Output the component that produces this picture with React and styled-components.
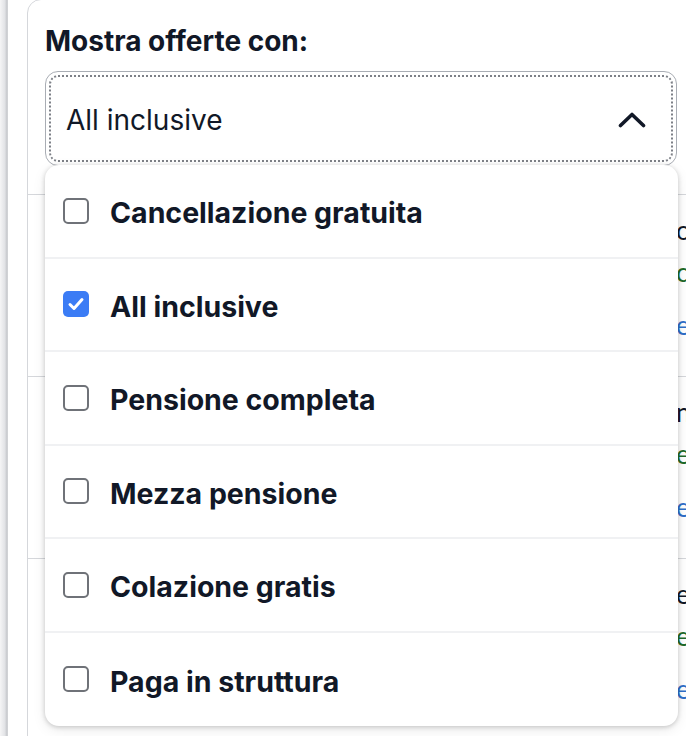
import React from 'react';
import styled, { createGlobalStyle } from 'styled-components';

const GlobalStyle = createGlobalStyle`
  html, body {
    margin: 0;
    padding: 0;
    background: #fff;
    overflow: hidden;
  }
  body {
    font-family: 'Inter', 'Liberation Sans', sans-serif;
    color: #111827;
  }
`;

const Page = styled.div`
  display: flex;
  align-items: flex-start;
  width: 686px;
  height: 736px;
  overflow: hidden;
`;

const Rail = styled.div`
  flex: none;
  width: 8px;
  height: 736px;
  background: linear-gradient(to right, #f5f5f6, #e2e3e6 60%, #c3c5c9 90%, #e6e7e9);
`;

const Card = styled.section`
  flex: none;
  width: 900px;
  min-height: 760px;
  margin: -1px 0 0 19px;
  border: 1px solid #d5d7db;
  border-radius: 14px 14px 0 0;
  background: #fff;
`;

const FilterSection = styled.div`
  padding: 24px 0 28px 17px;
  border-bottom: 1px solid #d5d7db;
`;

const Title = styled.h2`
  margin: 0 0 13px;
  font-size: 28px;
  line-height: 34px;
  font-weight: 700;
  color: #111827;
`;

const SelectWrap = styled.div`
  position: relative;
  width: 632px;
`;

const SelectButton = styled.div`
  box-sizing: border-box;
  display: flex;
  align-items: center;
  justify-content: space-between;
  height: 95px;
  padding: 2px 30px 0 20px;
  border: 1.5px solid #a9adb4;
  border-radius: 13px;
  outline: 2px dotted #7d8087;
  outline-offset: -6px;
  font-size: 28px;
  color: #111827;
`;

const Menu = styled.ul`
  position: absolute;
  top: calc(100% - 1px);
  left: 0;
  width: 633px;
  margin: 0;
  padding: 0;
  list-style: none;
  background: #fff;
  border-radius: 14px;
  box-shadow: 0 1px 5px rgba(0, 0, 0, 0.2), 0 4px 14px rgba(0, 0, 0, 0.08);
  overflow: hidden;
  z-index: 2;
`;

const Option = styled.li`
  box-sizing: border-box;
  display: flex;
  align-items: center;
  gap: 21px;
  height: 93.5px;
  padding: 0 0 0 18px;
  border-bottom: 2px solid #f0f1f3;
  font-size: 28.5px;
  font-weight: 700;
  color: #111827;

  &:last-child {
    border-bottom: none;
  }
`;

const Label = styled.span`
  position: relative;
  top: 2px;
`;

const Box = styled.span`
  flex: none;
  box-sizing: border-box;
  display: flex;
  align-items: center;
  justify-content: center;
  width: 26px;
  height: 26px;
  border-radius: 5px;
  border: ${({ $checked }) => ($checked ? 'none' : '2px solid #6f7278')};
  background: ${({ $checked }) => ($checked ? '#3b7cf5' : '#fff')};
`;

const OfferRow = styled.div`
  display: grid;
  grid-template-columns: 648px 1fr;
  height: 181px;
  border-bottom: 1px solid #d5d7db;
`;

const Thumb = styled.div``;

const Info = styled.div`
  padding-top: 19px;
  font-family: 'Lato', 'Liberation Sans', sans-serif;
  font-size: 26px;
  line-height: 32px;
  white-space: nowrap;
`;

const Name = styled.div`
  margin-bottom: 10px;
  color: #111827;
`;

const Perk = styled.div`
  margin-bottom: 21px;
  color: #1f6b2b;
`;

const Link = styled.div`
  color: #2f6fc9;
`;

const Chevron = () => (
  <svg width="28" height="16" viewBox="0 0 28 16" fill="none">
    <path
      d="M2.5 13.5 L14 2.5 L25.5 13.5"
      stroke="#111827"
      strokeWidth="3.6"
      strokeLinecap="round"
      strokeLinejoin="round"
    />
  </svg>
);

const Check = () => (
  <svg width="20" height="20" viewBox="0 0 20 20" fill="none">
    <path
      d="M4 10.5 L8 14.5 L16 5.5"
      stroke="#fff"
      strokeWidth="3"
      strokeLinecap="round"
      strokeLinejoin="round"
    />
  </svg>
);

const options = [
  { label: 'Cancellazione gratuita', checked: false },
  { label: 'All inclusive', checked: true },
  { label: 'Pensione completa', checked: false },
  { label: 'Mezza pensione', checked: false },
  { label: 'Colazione gratis', checked: false },
  { label: 'Paga in struttura', checked: false },
];

const offers = [
  { name: 'o', perk: 'c', link: 'e' },
  { name: 'n', perk: 'e', link: 'e' },
  { name: 'e', perk: 'e', link: 'e' },
];

export default function App() {
  return (
    <>
      <GlobalStyle />
      <Page>
        <Rail />
        <Card>
          <FilterSection>
            <Title>Mostra offerte con:</Title>
            <SelectWrap>
              <SelectButton>
                <span>All inclusive</span>
                <Chevron />
              </SelectButton>
              <Menu>
                {options.map((o) => (
                  <Option key={o.label}>
                    <Box $checked={o.checked}>{o.checked && <Check />}</Box>
                    <Label>{o.label}</Label>
                  </Option>
                ))}
              </Menu>
            </SelectWrap>
          </FilterSection>
          {offers.map((o, i) => (
            <OfferRow key={i}>
              <Thumb />
              <Info>
                <Name>{o.name}</Name>
                <Perk>{o.perk}</Perk>
                <Link>{o.link}</Link>
              </Info>
            </OfferRow>
          ))}
        </Card>
      </Page>
    </>
  );
}
